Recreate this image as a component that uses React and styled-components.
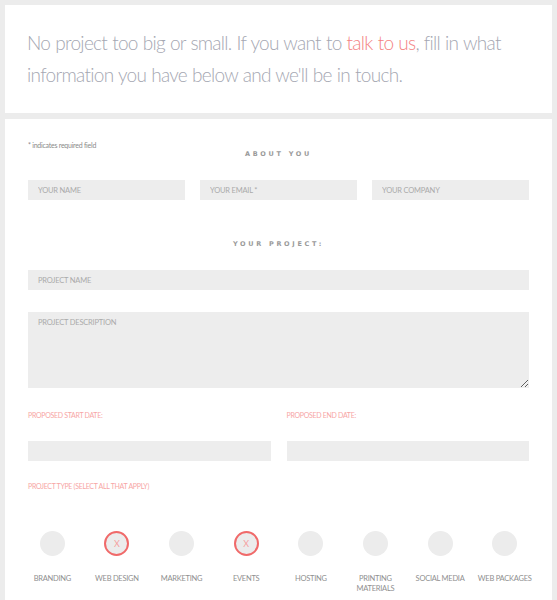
import React from "react";
import styled, { createGlobalStyle } from "styled-components";

const Global = createGlobalStyle`
  * { box-sizing: border-box; }
  html, body { margin: 0; padding: 0; background: #ececec; }
  body { font-family: Lato, "Open Sans", sans-serif; }
`;

const Page = styled.div`
  display: flex;
  flex-direction: column;
  gap: 6px;
  padding: 5px 5px 0 5px;
`;

const Card = styled.section`
  background: #ffffff;
  padding: ${(p) => p.$pad};
`;

const Lead = styled.p`
  margin: 0;
  font-family: Lato, sans-serif;
  font-weight: 300;
  font-size: 19px;
  letter-spacing: -0.7px;
  word-spacing: 0.5px;
  line-height: 32px;
  color: #a5a7b2;
`;

const Accent = styled.span`
  color: #f48282;
`;

const Note = styled.div`
  font-size: 7px;
  letter-spacing: -0.25px;
  line-height: 9px;
  color: #8a8a8a;
`;

const Heading = styled.h3`
  margin: ${(p) => p.$m};
  text-align: center;
  font-family: "DejaVu Sans", sans-serif;
  font-weight: 700;
  font-size: 6.5px;
  line-height: 9px;
  letter-spacing: 2.7px;
  color: #9a9a9a;
`;

const Row = styled.div`
  display: grid;
  grid-template-columns: ${(p) => p.$cols};
  column-gap: ${(p) => p.$gap}px;
  margin-top: ${(p) => p.$mt}px;
`;

const Field = styled.input`
  display: block;
  width: 100%;
  height: 20px;
  border: none;
  outline: none;
  background: #ededed;
  padding: 0 10px;
  font-family: Lato, sans-serif;
  font-size: 7.5px;
  letter-spacing: -0.2px;
  color: #999;
  &::placeholder { color: #aaaaaa; }
`;

const Area = styled.textarea`
  display: block;
  width: 100%;
  height: 76px;
  margin-top: 22px;
  border: none;
  outline: none;
  background: #ededed;
  padding: 6px 10px;
  font-family: Lato, sans-serif;
  font-size: 7.5px;
  letter-spacing: -0.2px;
  color: #999;
  resize: vertical;
  &::placeholder { color: #aaaaaa; }
`;

const Label = styled.div`
  font-size: 7px;
  letter-spacing: -0.3px;
  line-height: 9px;
  color: #f7a5a5;
  margin-bottom: ${(p) => p.$mb || 0}px;
`;

const Types = styled.div`
  display: grid;
  grid-template-columns: repeat(8, 1fr);
  margin: 40px -8px 0 -8px;
`;

const Type = styled.div`
  display: flex;
  flex-direction: column;
  align-items: center;
`;

const Dot = styled.div`
  width: 25px;
  height: 25px;
  border-radius: 50%;
  background: #ececec;
  border: ${(p) => (p.$on ? "2px solid #f06a6a" : "none")};
  display: flex;
  align-items: center;
  justify-content: center;
  font-size: 9px;
  color: #f6a0a0;
`;

const TypeName = styled.div`
  margin-top: 18px;
  text-align: center;
  font-size: 7.5px;
  letter-spacing: -0.25px;
  line-height: 10px;
  color: #8f8f8f;
  max-width: 60px;
`;

const types = [
  ["BRANDING", false],
  ["WEB DESIGN", true],
  ["MARKETING", false],
  ["EVENTS", true],
  ["HOSTING", false],
  ["PRINTING MATERIALS", false],
  ["SOCIAL MEDIA", false],
  ["WEB PACKAGES", false],
];

export default function App() {
  return (
    <>
      <Global />
      <Page>
        <Card $pad="22px 22px 22px 22px">
          <Lead>
            No project too big or small. If you want to <Accent>talk to us</Accent>, fill in what information you have below and we'll be in touch.
          </Lead>
        </Card>
        <Card $pad="22px 23px 40px 23px">
          <Note>* indicates required field</Note>
          <Heading $m="0">ABOUT YOU</Heading>
          <Row $cols="1fr 1fr 1fr" $gap={15} $mt={21}>
            <Field placeholder="YOUR NAME" />
            <Field placeholder="YOUR EMAIL *" />
            <Field placeholder="YOUR COMPANY" />
          </Row>
          <Heading $m="40px 0 0 0">YOUR PROJECT:</Heading>
          <Row $cols="1fr" $gap={0} $mt={21}>
            <Field placeholder="PROJECT NAME" />
          </Row>
          <Area placeholder="PROJECT DESCRIPTION" />
          <Row $cols="1fr 1fr" $gap={16} $mt={23}>
            <div>
              <Label $mb={21}>PROPOSED START DATE:</Label>
              <Field />
            </div>
            <div>
              <Label $mb={21}>PROPOSED END DATE:</Label>
              <Field />
            </div>
          </Row>
          <Row $cols="1fr" $gap={0} $mt={21}>
            <Label>PROJECT TYPE (SELECT ALL THAT APPLY)</Label>
          </Row>
          <Types>
            {types.map(([name, on]) => (
              <Type key={name}>
                <Dot $on={on}>{on ? "X" : ""}</Dot>
                <TypeName>{name}</TypeName>
              </Type>
            ))}
          </Types>
        </Card>
      </Page>
    </>
  );
}
